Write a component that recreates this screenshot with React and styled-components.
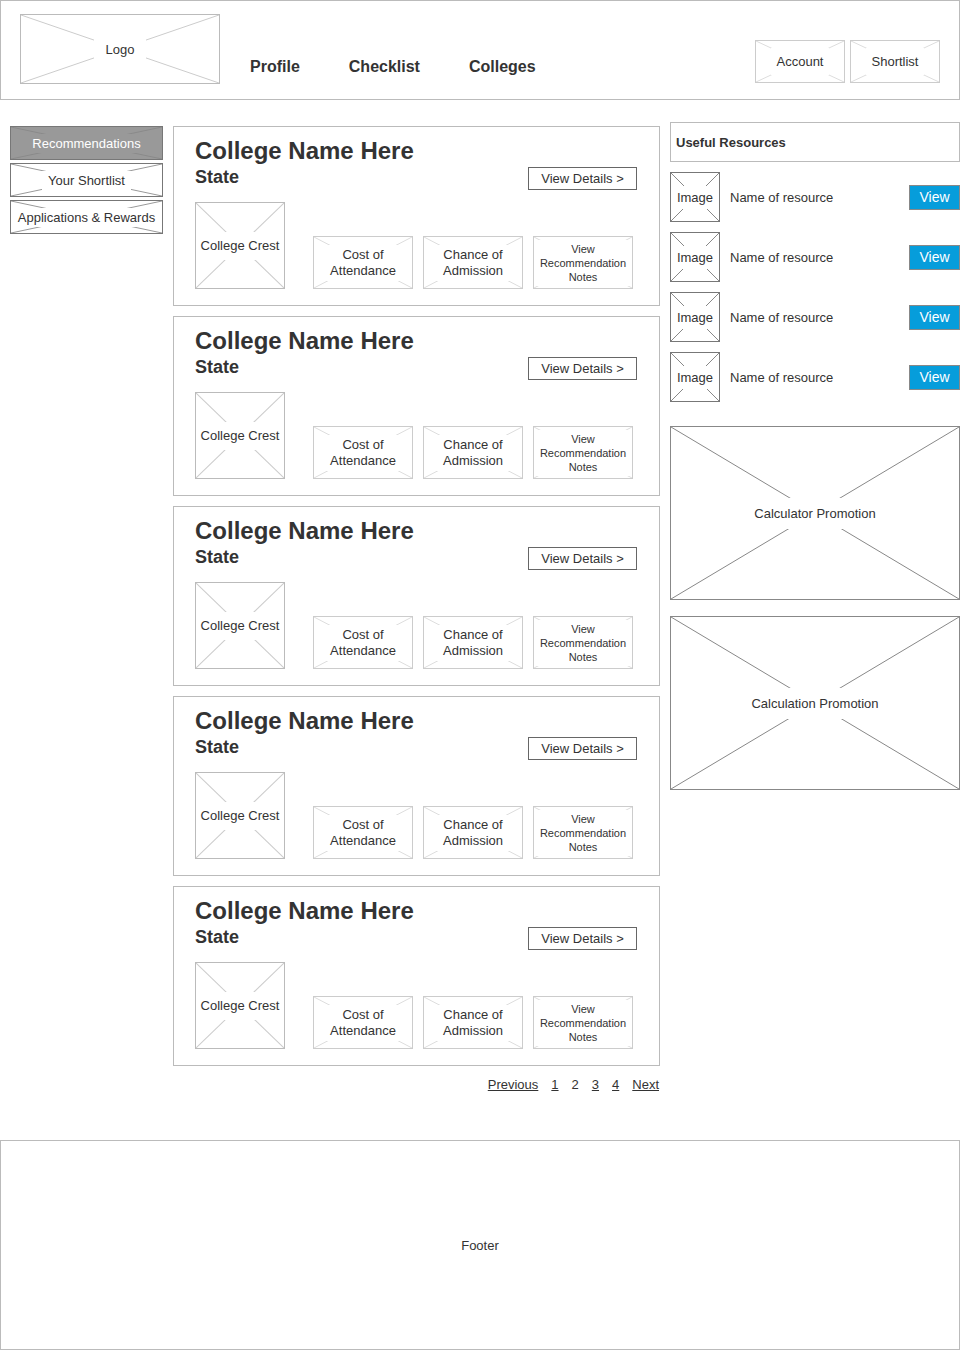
import React from "react";
import styled, { createGlobalStyle } from "styled-components";

const Global = createGlobalStyle`
  html, body { margin: 0; padding: 0; background: #fff; }
  body {
    font-family: "Liberation Sans", Arial, Helvetica, sans-serif;
    color: #333;
    font-size: 13px;
  }
  * { box-sizing: border-box; }
`;

/* ---------- sketch placeholder (box with a cross) ---------- */
const SketchFrame = styled.div`
  position: relative;
  flex: none;
  display: flex;
  align-items: center;
  justify-content: center;
  text-align: center;
  overflow: hidden;
  border: 1px solid ${(p) => p.$border || "#bbb"};
  background: ${(p) => p.$bg || "#fff"};
  color: ${(p) => p.$color || "#333"};
`;

const CrossSvg = styled.svg`
  position: absolute;
  inset: 0;
  width: 100%;
  height: 100%;
`;

const SketchLabel = styled.span`
  position: relative;
  display: inline-block;
  background: ${(p) => p.$bg || "#fff"};
  padding: ${(p) => p.$pad || "3px 6px"};
`;

function Sketch({ as, line = "#ccc", bg = "#fff", border, color, pad, children, ...rest }) {
  return (
    <SketchFrame as={as} $border={border} $bg={bg} $color={color} {...rest}>
      <CrossSvg viewBox="0 0 100 100" preserveAspectRatio="none" aria-hidden="true">
        <line x1="0" y1="0" x2="100" y2="100" stroke={line} strokeWidth="1" vectorEffect="non-scaling-stroke" />
        <line x1="100" y1="0" x2="0" y2="100" stroke={line} strokeWidth="1" vectorEffect="non-scaling-stroke" />
      </CrossSvg>
      {children != null && (
        <SketchLabel $bg={bg} $pad={pad}>
          {children}
        </SketchLabel>
      )}
    </SketchFrame>
  );
}

/* ---------- header ---------- */
const Header = styled.header`
  height: 100px;
  border: 1px solid #bbb;
  display: flex;
  align-items: flex-start;
  padding: 13px 19px 0 19px;
`;

const LogoBox = styled(Sketch)`
  width: 200px;
  height: 70px;
  font-size: 13px;
`;

const Nav = styled.nav`
  display: flex;
  gap: 49px;
  margin-left: 30px;
  margin-top: 44px;
`;

const NavLink = styled.a`
  font-size: 16px;
  line-height: 18px;
  font-weight: bold;
  color: #333;
  text-decoration: none;
`;

const HeaderActions = styled.div`
  display: flex;
  gap: 5px;
  margin-left: auto;
  margin-top: 26px;
`;

const HeaderButton = styled(Sketch)`
  width: 90px;
  height: 43px;
  font-size: 13px;
`;

/* ---------- main ---------- */
const Main = styled.main`
  display: flex;
  align-items: flex-start;
  gap: 10px;
  padding: 22px 0 47px 10px;
`;

const Sidebar = styled.aside`
  width: 153px;
  margin-top: 4px;
  display: flex;
  flex-direction: column;
  gap: 3px;
`;

const SideButton = styled(Sketch)`
  width: 153px;
  height: 34px;
  font-size: 13px;
`;

const CenterColumn = styled.section`
  width: 487px;
  margin-top: 4px;
  display: flex;
  flex-direction: column;
`;

const CardList = styled.div`
  display: flex;
  flex-direction: column;
  gap: 10px;
`;

const Card = styled.article`
  height: 180px;
  border: 1px solid #bbb;
  padding: 10px 22px 16px 21px;
  display: flex;
  flex-direction: column;
`;

const CardHead = styled.div`
  display: flex;
  justify-content: space-between;
  align-items: flex-start;
`;

const CardTitleBlock = styled.div`
  display: flex;
  flex-direction: column;
`;

const CollegeName = styled.h2`
  margin: 0;
  font-size: 24px;
  line-height: 28px;
  font-weight: bold;
  color: #333;
`;

const StateName = styled.div`
  margin-top: 2px;
  font-size: 18px;
  line-height: 20px;
  font-weight: bold;
  color: #333;
`;

const DetailsButton = styled.button`
  margin-top: 30px;
  width: 109px;
  height: 23px;
  border: 1px solid #666;
  background: #fff;
  color: #333;
  font-family: inherit;
  font-size: 13px;
  padding: 0;
  cursor: pointer;
`;

const CardBody = styled.div`
  display: flex;
  align-items: flex-end;
  margin-top: 12px;
`;

const Crest = styled(Sketch)`
  width: 90px;
  height: 87px;
  font-size: 13px;
  line-height: 16px;
`;

const InfoRow = styled.div`
  display: flex;
  gap: 10px;
  margin-left: 28px;
`;

const InfoBox = styled(Sketch)`
  width: 100px;
  height: 53px;
  font-size: ${(p) => (p.$small ? "11px" : "13px")};
  line-height: ${(p) => (p.$small ? "14px" : "16px")};
`;

const Pagination = styled.nav`
  display: flex;
  justify-content: flex-end;
  gap: 13px;
  margin-top: 11px;
  padding-right: 1px;
  font-size: 13px;
  line-height: 16px;
`;

const PageLink = styled.a`
  color: #333;
  text-decoration: ${(p) => (p.$current ? "none" : "underline")};
`;

/* ---------- right column ---------- */
const RightColumn = styled.aside`
  width: 290px;
  display: flex;
  flex-direction: column;
`;

const ResourcesHeader = styled.div`
  height: 40px;
  border: 1px solid #bbb;
  padding-left: 5px;
  display: flex;
  align-items: center;
  font-size: 13px;
  font-weight: bold;
`;

const ResourceList = styled.div`
  margin-top: 10px;
  display: flex;
  flex-direction: column;
  gap: 10px;
`;

const ResourceRow = styled.div`
  display: flex;
  align-items: center;
  height: 50px;
`;

const ResourceImage = styled(Sketch)`
  width: 50px;
  height: 50px;
  font-size: 13px;
`;

const ResourceName = styled.div`
  flex: 1;
  margin-left: 10px;
  font-size: 13px;
`;

const ViewButton = styled.button`
  width: 51px;
  height: 25px;
  background: #069ddb;
  border: 1px solid #888;
  color: #fff;
  font-family: inherit;
  font-size: 14px;
  padding: 0;
  cursor: pointer;
`;

const Promo = styled(Sketch)`
  width: 290px;
  height: 174px;
  margin-top: ${(p) => p.$gap}px;
  font-size: 13px;
`;

/* ---------- footer ---------- */
const Footer = styled.footer`
  height: 210px;
  border: 1px solid #bbb;
  display: flex;
  align-items: center;
  justify-content: center;
  font-size: 13px;
`;

const colleges = [1, 2, 3, 4, 5];
const resources = [1, 2, 3, 4];

export default function App() {
  return (
    <>
      <Global />
      <Header>
        <LogoBox border="#bbb" line="#ccc" pad="4px 12px">Logo</LogoBox>
        <Nav>
          <NavLink>Profile</NavLink>
          <NavLink>Checklist</NavLink>
          <NavLink>Colleges</NavLink>
        </Nav>
        <HeaderActions>
          <HeaderButton border="#ccc" line="#ddd" pad="6px 6px">Account</HeaderButton>
          <HeaderButton border="#ccc" line="#ddd" pad="6px 6px">Shortlist</HeaderButton>
        </HeaderActions>
      </Header>

      <Main>
        <Sidebar>
          <SideButton border="#777" bg="#999" line="#8a8a8a" color="#fff" pad="2px 4px">
            Recommendations
          </SideButton>
          <SideButton border="#777" line="#999" pad="2px 6px">Your Shortlist</SideButton>
          <SideButton border="#777" line="#999" pad="2px 2px">Applications &amp; Rewards</SideButton>
        </Sidebar>

        <CenterColumn>
          <CardList>
            {colleges.map((c) => (
              <Card key={c}>
                <CardHead>
                  <CardTitleBlock>
                    <CollegeName>College Name Here</CollegeName>
                    <StateName>State</StateName>
                  </CardTitleBlock>
                  <DetailsButton>View Details &gt;</DetailsButton>
                </CardHead>
                <CardBody>
                  <Crest border="#bbb" line="#ccc" pad="6px 0">College Crest</Crest>
                  <InfoRow>
                    <InfoBox border="#ccc" line="#ddd" pad="2px 6px">
                      Cost of
                      <br />
                      Attendance
                    </InfoBox>
                    <InfoBox border="#ccc" line="#ddd" pad="2px 6px">
                      Chance of
                      <br />
                      Admission
                    </InfoBox>
                    <InfoBox $small border="#ccc" line="#ddd" pad="2px 4px">
                      View
                      <br />
                      Recommendation
                      <br />
                      Notes
                    </InfoBox>
                  </InfoRow>
                </CardBody>
              </Card>
            ))}
          </CardList>
          <Pagination>
            <PageLink>Previous</PageLink>
            <PageLink>1</PageLink>
            <PageLink $current>2</PageLink>
            <PageLink>3</PageLink>
            <PageLink>4</PageLink>
            <PageLink>Next</PageLink>
          </Pagination>
        </CenterColumn>

        <RightColumn>
          <ResourcesHeader>Useful Resources</ResourcesHeader>
          <ResourceList>
            {resources.map((r) => (
              <ResourceRow key={r}>
                <ResourceImage border="#777" line="#888" pad="4px 1px">Image</ResourceImage>
                <ResourceName>Name of resource</ResourceName>
                <ViewButton>View</ViewButton>
              </ResourceRow>
            ))}
          </ResourceList>
          <Promo $gap={24} border="#888" line="#888" pad="8px 8px">Calculator Promotion</Promo>
          <Promo $gap={16} border="#888" line="#888" pad="8px 8px">Calculation Promotion</Promo>
        </RightColumn>
      </Main>

      <Footer>Footer</Footer>
    </>
  );
}
